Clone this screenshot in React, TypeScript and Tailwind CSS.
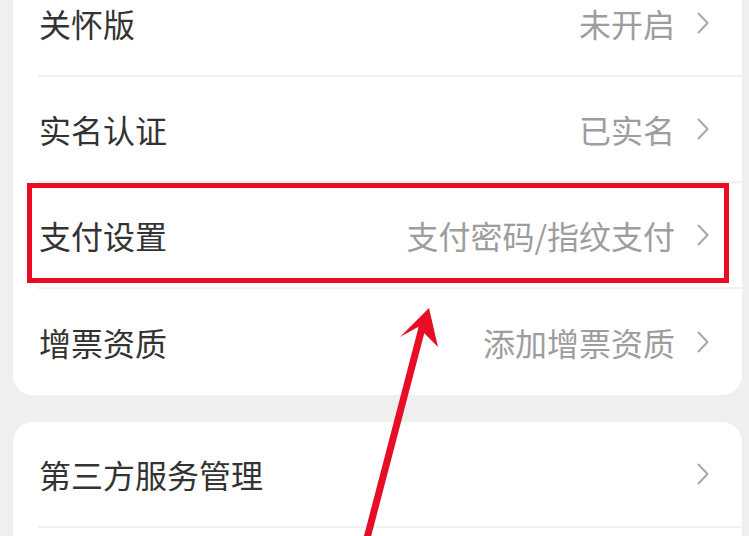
import { FC } from "react";

type Item = { label: string; value?: string; boxed?: boolean };

const Chevron: FC = () => (
  <svg width="12" height="22" viewBox="0 0 12 22" className="shrink-0">
    <polyline points="1.5,1.5 10.5,11 1.5,20.5" fill="none" stroke="#a8a8a8" strokeWidth="2" strokeLinecap="round" strokeLinejoin="round" />
  </svg>
);

const Row: FC<Item & { last?: boolean }> = ({ label, value, boxed, last }) => (
  <div
    className={`relative ml-[25px] flex h-[106px] items-center justify-between pl-[1px] pr-[33px] ${
      last ? "" : "border-b-2 border-[#f1f1f1]"
    }`}
  >
    <span className="text-[32px] leading-none text-[#333333]">{label}</span>
    <div className="flex items-center gap-[22px]">
      {value && <span className="text-[32px] leading-none text-[#9d9d9d]">{value}</span>}
      <Chevron />
    </div>
    {boxed && (
      <div className="pointer-events-none absolute -left-[11px] top-0 right-[13px] bottom-[4px] border-[5px] border-[#e60d25]" />
    )}
  </div>
);

const first: Item[] = [
  { label: "关怀版", value: "未开启" },
  { label: "实名认证", value: "已实名" },
  { label: "支付设置", value: "支付密码/指纹支付", boxed: true },
  { label: "增票资质", value: "添加增票资质" },
];

const App: FC = () => {
  return (
    <div
      className="relative h-[536px] w-[749px] overflow-hidden bg-[#efefef] pl-[13px] pr-[7px]"
      style={{ fontFamily: '"Noto Sans CJK SC", "Noto Sans", sans-serif' }}
    >
      <div className="-mt-[29px] rounded-[20px] bg-white">
        {first.map((it, i) => (
          <Row key={it.label} {...it} last={i === first.length - 1} />
        ))}
      </div>
      <div className="mt-[27px] rounded-[20px] bg-white">
        <Row label="第三方服务管理" />
        <div className="h-[40px]" />
      </div>

      {/* annotation arrow */}
      <svg className="pointer-events-none absolute inset-0" width="749" height="536" viewBox="0 0 749 536">
        <line x1="366" y1="542" x2="422" y2="328" stroke="#e60d25" strokeWidth="7" />
        <path d="M429 308 L400 337 L418 327 L438 347 Z" fill="#e60d25" />
      </svg>
    </div>
  );
};

export default App;
